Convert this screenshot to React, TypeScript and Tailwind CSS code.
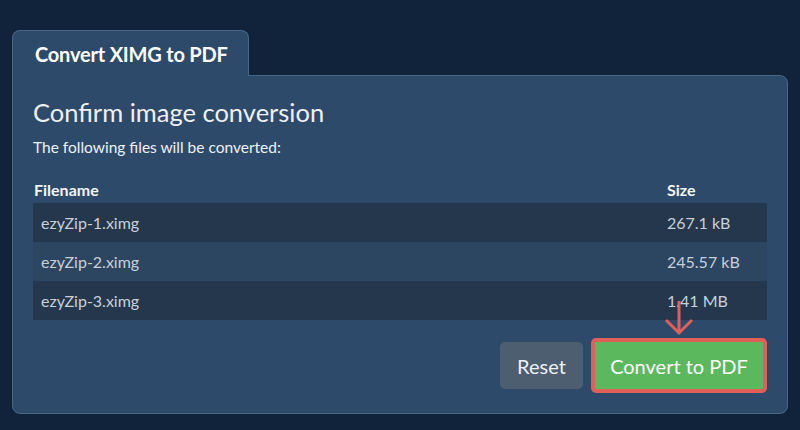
import React from "react";

const rows = [
  { name: "ezyZip-1.ximg", size: "267.1 kB" },
  { name: "ezyZip-2.ximg", size: "245.57 kB" },
  { name: "ezyZip-3.ximg", size: "1.41 MB" },
];

export default function App() {
  return (
    <div
      className="w-[800px] h-[430px] bg-[#11233a] pt-[30px] px-[12px] overflow-hidden"
      style={{ fontFamily: "Lato, 'Open Sans', sans-serif" }}
    >
      <div className="flex">
        <div className="w-[237px] h-[46px] bg-[#2e4a6a] border border-b-0 border-[#4b6684] rounded-t-[8px] pl-[22px] flex items-center relative z-10 mb-[-1px]">
          <span className="text-[20px] font-bold text-white tracking-[-0.2px]">Convert XIMG to PDF</span>
        </div>
      </div>
      <div className="h-[339px] bg-[#2e4a6a] border border-[#4b6684] rounded-b-[8px] rounded-tr-[8px] px-[20px] pt-[20px]">
        <h1 className="text-[25.5px] leading-[32px] text-[#eef1f4] font-normal">Confirm image conversion</h1>
        <p className="mt-[9px] text-[15.5px] leading-[20px] text-[#eef1f4]">The following files will be converted:</p>
        <div className="mt-[19px] w-[734px]">
          <div className="flex h-[27px] items-center text-[16px] font-bold text-[#f2f4f6]">
            <div className="w-[634px] pl-[1px]">Filename</div>
            <div>Size</div>
          </div>
          {rows.map((r, i) => (
            <div
              key={r.name}
              className={
                "flex h-[39px] items-center text-[16px] text-[#c9d0d8] " +
                (i % 2 === 1 ? "bg-[#2c4560]" : "bg-[#24374d]")
              }
            >
              <div className="w-[634px] pl-[8px]">{r.name}</div>
              <div>{r.size}</div>
            </div>
          ))}
        </div>
        <div className="mt-[18px] w-[734px] flex justify-end items-center gap-[8px] relative">
          <button className="w-[83px] h-[47px] rounded-[5px] bg-[#4d5e70] text-[20px] text-[#eef1f4]">Reset</button>
          <div className="relative">
            <svg
              className="absolute left-[73px] top-[-38px]"
              width="30"
              height="36"
              viewBox="0 0 30 36"
              fill="none"
              stroke="#e05f59"
              strokeWidth="3"
            >
              <line x1="15" y1="1" x2="15" y2="33" />
              <polyline points="2,20 15,33 28,20" />
            </svg>
            <button className="w-[176px] h-[55px] rounded-[5px] border-[4px] border-[#e05f59] bg-[#5cb85c] text-[20px] text-white">
              Convert to PDF
            </button>
          </div>
        </div>
      </div>
    </div>
  );
}
